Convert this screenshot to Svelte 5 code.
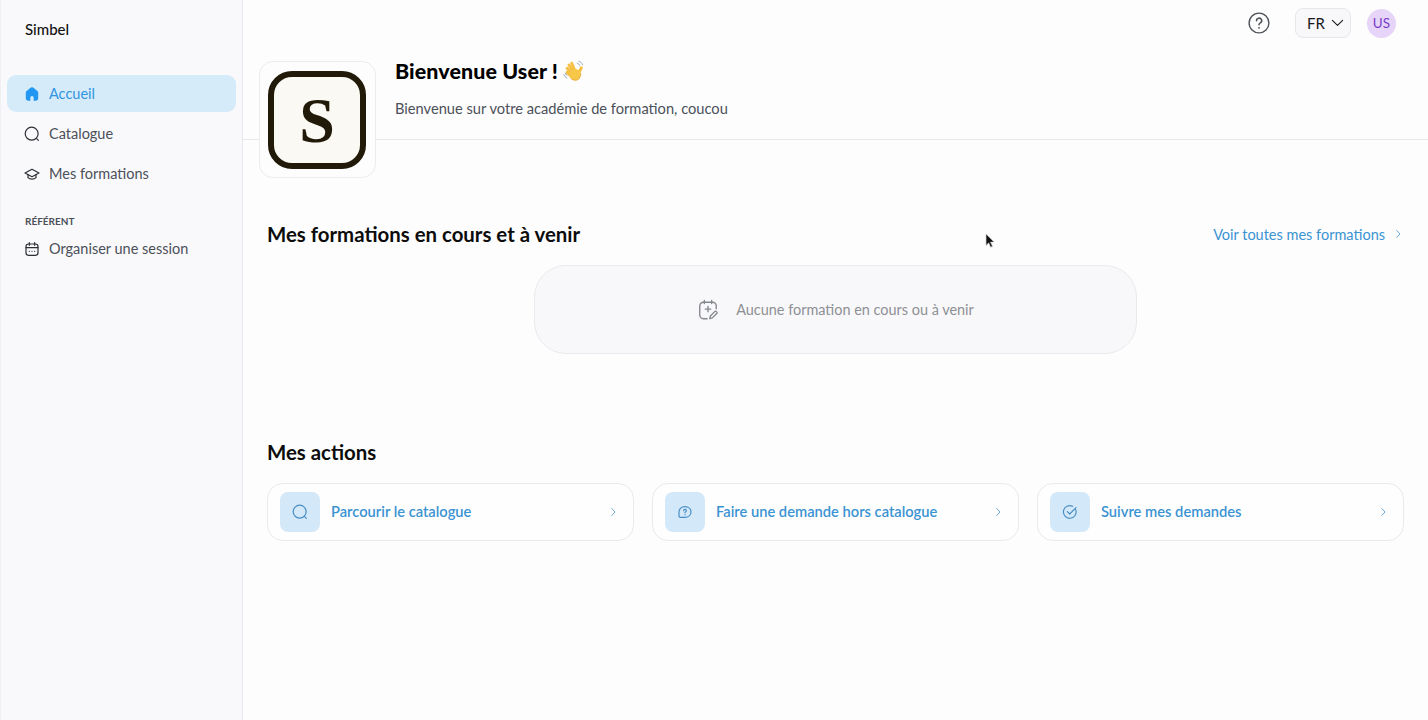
<script lang="ts">
  const nav = [
    { label: "Accueil", icon: "home", active: true },
    { label: "Catalogue", icon: "search" },
    { label: "Mes formations", icon: "cap" }
  ];
  const actions = [
    { label: "Parcourir le catalogue", icon: "search" },
    { label: "Faire une demande hors catalogue", icon: "bubble" },
    { label: "Suivre mes demandes", icon: "check" }
  ];
</script>

{#snippet icon(name: string)}
  <svg viewBox="0 0 24 24" fill="none" stroke="currentColor" stroke-width="1.800" stroke-linecap="round" stroke-linejoin="round">
    {#if name === "home"}
      <path fill="currentColor" stroke="none" fill-rule="evenodd" d="M10.300 2.400a2.700 2.700 0 0 1 3.400 0l6.400 5a3 3 0 0 1 1.200 2.400V18a4 4 0 0 1-4 4H6.700a4 4 0 0 1-4-4V9.800a3 3 0 0 1 1.200-2.400zM9.500 22h5v-4.500a2.500 2.500 0 0 0-5 0z" />
    {:else if name === "search"}
      <circle cx="11.500" cy="11.500" r="9.700" />
      <path d="M19 19l2.500 2.500" />
    {:else if name === "cap"}
      <path d="M12 5 1.500 10.500 12 16l10.500-5.500z" />
      <path d="M6 13v4.500c1.500 1.500 3.800 2.200 6 2.200s4.500-.7 6-2.200V13" />
    {:else if name === "calendar"}
      <rect x="3" y="4.500" width="18" height="17" rx="4" />
      <path d="M8 2.500v4M16 2.500v4M3 10h18M8 15.500h.01M12 15.500h.01M16 15.500h.01" />
    {:else if name === "bubble"}
      <path d="M12 4c5 0 9 3 9 8s-4 8-9 8H5c-1.500 0-2-1-2-2v-6c0-5 4-8 9-8z" />
      <path d="M10 10a2 2 0 1 1 3 1.700c-.7.4-1 .8-1 1.500M12 16h.01" />
    {:else if name === "check"}
      <path d="M20.500 8.500A9.500 9.500 0 1 1 16 3.500" />
      <path d="M8 11.500l3.500 3.500L21 5.500" />
    {:else if name === "chevron"}
      <path d="M9.500 5l6.500 7-6.500 7" />
    {/if}
  </svg>
{/snippet}

<div class="app">
  <aside class="sidebar">
    <div class="brand">Simbel</div>
    <nav class="nav">
      {#each nav as item (item.label)}
        <a class="nav-item" class:active={item.active} href="#top">
          <span class="nav-icon">{@render icon(item.icon)}</span>
          <span class="nav-label">{item.label}</span>
        </a>
      {/each}
    </nav>
    <div class="nav-title">RÉFÉRENT</div>
    <a class="nav-item" href="#top">
      <span class="nav-icon">{@render icon("calendar")}</span>
      <span class="nav-label">Organiser une session</span>
    </a>
  </aside>

  <main class="main">
    <header class="topbar">
      <svg class="help" viewBox="0 0 24 24" fill="none" stroke="currentColor" stroke-width="1.500" stroke-linecap="round">
        <circle cx="12" cy="12" r="10.800" />
        <path d="M9.300 9.500a2.800 2.800 0 1 1 4.200 2.400c-1 .6-1.500 1.100-1.500 2.100" stroke-width="1.700" />
        <path d="M12 17.300h.01" stroke-width="2" />
      </svg>
      <button class="lang">
        FR
        <svg viewBox="0 0 14 8" fill="none" stroke="currentColor" stroke-width="1.200" stroke-linecap="round" stroke-linejoin="round"><path d="M1.500 1.200 7 6.500l5.500-5.300" /></svg>
      </button>
      <div class="avatar">US</div>
    </header>

    <section class="welcome">
      <div class="logo-box">
        <div class="logo"><span>S</span></div>
      </div>
      <div class="welcome-text">
        <h1>Bienvenue User !
          <svg class="wave" viewBox="0 0 24 24" fill="none" stroke-linecap="round">
            <g stroke="#f5bf42" stroke-width="3.200">
              <path d="M12 14 6.500 5.500" />
              <path d="M13.500 13 9.500 3.500" />
              <path d="M10 15.500 4.500 9" />
              <path d="M9 18 4.500 13.500" />
              <path d="M17 14.500 20 8.500" />
            </g>
            <path fill="#f7c748" d="M8 12.500c2-3 8.500-3.500 10.500-.5 1.500 3.500.5 7-1.500 9-2.500 2-6 1.700-8-.5-1.700-2-2.500-5-1-8z" />
            <path stroke="#e0a22e" stroke-width=".8" d="M8.500 20c2.300 2.500 6 2.500 8.500 1 1.500-1.500 2.500-4 2.500-6" />
            <path stroke="#8a9fb8" stroke-width="1" d="M17.500 1.500c1.800.4 3.200 1.700 3.800 3.500M15.500 3.500c1.300.3 2.200 1.100 2.700 2.300M1 16c.5 1.700 1.700 3 3.300 3.700M2.500 14.500c.3 1 .9 1.700 1.800 2.200" />
          </svg>
        </h1>
        <p>Bienvenue sur votre académie de formation, coucou</p>
      </div>
    </section>

    <section class="courses">
      <div class="section-head">
        <h2>Mes formations en cours et à venir</h2>
        <a class="see-all" href="#top">
          Voir toutes mes formations
          <span class="chev">{@render icon("chevron")}</span>
        </a>
      </div>
      <div class="empty">
        <svg viewBox="0 0 24 24" fill="none" stroke="currentColor" stroke-width="1.500" stroke-linecap="round" stroke-linejoin="round">
          <path d="M11 21.500H7a4 4 0 0 1-4-4V7.500a4 4 0 0 1 4-4h10a4 4 0 0 1 4 4v3" />
          <path d="M8 1.500v3.500M16 1.500v3.500M12 8v6M9 11h6" />
          <path d="M14 21.500l.6-3 5-5c.7-.7 2.900 1.300 2.200 2.100l-5 5z" />
        </svg>
        <span>Aucune formation en cours ou à venir</span>
      </div>
    </section>

    <section class="actions">
      <h2>Mes actions</h2>
      <div class="action-grid">
        {#each actions as action (action.label)}
          <a class="action" href="#top">
            <span class="action-icon">{@render icon(action.icon)}</span>
            <span class="action-label">{action.label}</span>
            <span class="chev">{@render icon("chevron")}</span>
          </a>
        {/each}
      </div>
    </section>
  </main>

  <svg class="cursor" viewBox="0 0 12 18"><path fill="#111" stroke="#c9c9c9" stroke-width=".7" d="M1 1v13l3-3 2.200 5 2-1-2.200-4.800h4z" /></svg>
</div>

<style>
  :global(body) {
    margin: 0;
    background: #fdfdfd;
  }

  .app {
    position: relative;
    display: flex;
    height: 720px;
    overflow: hidden;
    font-family: "Lato", "Open Sans", sans-serif;
    color: #000;
    background: #fdfdfd;
  }

  a {
    text-decoration: none;
    color: inherit;
  }

  h1,
  h2,
  p {
    margin: 0;
  }

  .sidebar {
    width: 243px;
    flex: none;
    box-sizing: border-box;
    padding: 0 6px;
    background: #f9f9fb;
    border-right: 1px solid #e7e8eb;
    border-left: 1px solid #eeeff2;
  }

  .brand {
    padding: 20px 0 0 18px;
    height: 55px;
    font-size: 15px;
    line-height: 18px;
    font-weight: 500;
    color: #111;
  }

  .nav {
    display: flex;
    flex-direction: column;
    gap: 3px;
  }

  .nav-item {
    display: flex;
    align-items: center;
    gap: 9px;
    height: 37px;
    padding: 0 17px;
    border-radius: 9px;
    font-size: 14.500px;
    color: #4b5059;
  }

  .nav-label {
    margin-top: -1px;
  }

  .nav-item.active {
    background: #d6ebfa;
    color: #2f95e0;
  }

  .nav-icon {
    width: 16px;
    height: 16px;
    display: flex;
    color: #2c2f34;
  }

  .nav-icon svg {
    width: 100%;
    height: 100%;
  }

  .active .nav-icon {
    color: #2196f3;
  }

  .nav-title {
    margin: 23px 0 3px 18px;
    font-size: 10px;
    line-height: 12px;
    font-weight: 700;
    color: #4b5059;
  }

  .main {
    flex: 1;
    min-width: 0;
  }

  .topbar {
    display: flex;
    justify-content: flex-end;
    align-items: center;
    height: 46px;
    padding-right: 32px;
  }

  .help {
    width: 22px;
    height: 22px;
    color: #4f5358;
    margin-right: 25px;
  }

  .lang {
    display: flex;
    align-items: center;
    gap: 6px;
    width: 56px;
    height: 30px;
    box-sizing: border-box;
    padding: 0 0 0 11px;
    margin-right: 16px;
    border: 1.500px solid #e6e7ea;
    border-radius: 8px;
    background: #f8f8fa;
    font-family: inherit;
    font-size: 15px;
    color: #16181c;
  }

  .lang svg {
    width: 13px;
    height: 8px;
  }

  .avatar {
    width: 29px;
    height: 29px;
    border-radius: 50%;
    background: #e6d5f8;
    color: #7a3cc8;
    font-size: 13.500px;
    display: flex;
    align-items: center;
    justify-content: center;
  }

  .welcome {
    display: flex;
    height: 93px;
    padding-left: 16px;
    gap: 19px;
    border-bottom: 1px solid #e8e9ec;
  }

  .logo-box {
    width: 117px;
    height: 117px;
    margin-top: 15px;
    flex: none;
    box-sizing: border-box;
    padding-right: 1px;
    border: 1px solid #ebecef;
    border-radius: 14px;
    background: #fdfdfd;
    display: flex;
    align-items: center;
    justify-content: center;
    z-index: 1;
  }

  .logo {
    width: 98px;
    height: 98px;
    box-sizing: border-box;
    border: 6px solid #221a08;
    border-radius: 24px;
    background: #fbf9f3;
    display: flex;
    align-items: center;
    justify-content: center;
    font-family: "Liberation Serif", serif;
    font-size: 64px;
    line-height: 1;
    font-weight: 700;
    color: #221a08;
  }

  .logo span {
    margin-top: 2px;
  }

  .welcome-text {
    padding-top: 12px;
  }

  h1 {
    display: flex;
    align-items: center;
    gap: 5px;
    font-size: 21.400px;
    line-height: 26px;
    font-weight: 900;
    letter-spacing: 0.1px;
    color: #000;
  }

  .wave {
    width: 22px;
    height: 22px;
  }

  .welcome-text p {
    margin-top: 14px;
    font-size: 14.650px;
    line-height: 22px;
    color: #4b5059;
  }

  .courses {
    padding: 81px 24px 0;
  }

  .section-head {
    display: flex;
    align-items: center;
    justify-content: space-between;
    height: 26px;
  }

  h2 {
    font-size: 20.400px;
    line-height: 26px;
    font-weight: 700;
    color: #0c0c0c;
  }

  .see-all {
    display: flex;
    align-items: center;
    gap: 7px;
    font-size: 14.500px;
    color: #3a93d3;
  }

  .chev {
    width: 12px;
    height: 12px;
    display: flex;
    color: #5a9fd2;
    flex: none;
  }

  .chev svg {
    width: 100%;
    height: 100%;
  }

  .empty {
    width: 603px;
    height: 89px;
    box-sizing: border-box;
    margin: 18px auto 0;
    display: flex;
    align-items: center;
    justify-content: center;
    gap: 17px;
    border: 1px solid #e9eaed;
    border-radius: 32px;
    background: #f8f8fa;
    font-size: 14.450px;
    color: #8d9095;
  }

  .empty span {
    margin-top: -1px;
  }

  .empty svg {
    width: 22px;
    height: 22px;
    color: #85888d;
  }

  .actions {
    padding: 85px 24px 0;
  }

  .action-grid {
    display: grid;
    grid-template-columns: repeat(3, 1fr);
    gap: 18px;
    margin-top: 18px;
  }

  .action {
    display: flex;
    align-items: center;
    height: 58px;
    box-sizing: border-box;
    padding: 0 14px 0 12px;
    border: 1px solid #e9eaed;
    border-radius: 16px;
    background: #fefefe;
  }

  .action-icon {
    width: 40px;
    height: 40px;
    flex: none;
    display: flex;
    align-items: center;
    justify-content: center;
    border-radius: 8px;
    background: #d3e8f9;
    color: #4a8fc4;
  }

  .action-icon svg {
    width: 16px;
    height: 16px;
  }

  .action-label {
    flex: 1;
    margin: -2px 0 0 11px;
    font-size: 14.700px;
    font-weight: 600;
    color: #3a93d3;
  }

  .cursor {
    position: absolute;
    left: 985px;
    top: 233px;
    width: 11px;
    height: 16px;
  }
</style>
